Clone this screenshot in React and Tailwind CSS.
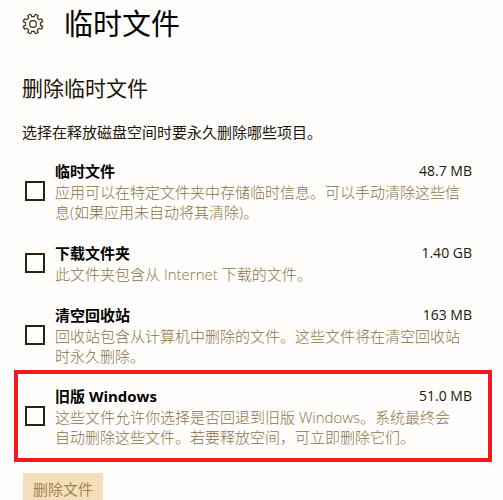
import React from "react";

const items = [
  {
    id: "temp",
    name: "临时文件",
    size: "48.7 MB",
    description: "应用可以在特定文件夹中存储临时信息。可以手动清除这些信\n息(如果应用未自动将其清除)。",
  },
  {
    id: "downloads",
    name: "下载文件夹",
    size: "1.40 GB",
    description: "此文件夹包含从 Internet 下载的文件。",
  },
  {
    id: "recycle",
    name: "清空回收站",
    size: "163 MB",
    description: "回收站包含从计算机中删除的文件。这些文件将在清空回收站\n时永久删除。",
  },
  {
    id: "old-windows",
    name: "旧版 Windows",
    size: "51.0 MB",
    description: "这些文件允许你选择是否回退到旧版 Windows。系统最终会\n自动删除这些文件。若要释放空间，可立即删除它们。",
    highlighted: true,
  },
];

export default function App() {
  return (
    <main className="h-screen overflow-hidden bg-[#fffefd] pt-1 text-[15px] leading-5 text-[#1c1508] font-['Open_Sans','Noto_Sans_CJK_SC',sans-serif]">
      <header className="flex items-center gap-5 px-[22px]">
        <GearIcon />
        <h1 className="text-[29px] leading-10 text-black">临时文件</h1>
      </header>

      <section className="mt-7">
        <h2 className="px-[22px] text-[21px] leading-8">删除临时文件</h2>
        <p className="mt-[18px] px-[22px]">选择在释放磁盘空间时要永久删除哪些项目。</p>

        <ul className="mt-[18px] mr-[11px] ml-[14px]">
          {items.map((item) => (
            <CleanupItem key={item.id} item={item} />
          ))}
        </ul>

        <button
          type="button"
          disabled
          className="mt-[11px] ml-[23px] h-8 bg-[#f5dfba] px-[10px] text-[#a08558]"
        >
          删除文件
        </button>
      </section>
    </main>
  );
}

function CleanupItem({ item }) {
  const frame = item.highlighted
    ? "mt-1 border-4 border-[#f5191f] py-[11px]"
    : "mt-5 border-x-4 border-transparent first:mt-0";

  return (
    <li className={`flex items-center gap-[10px] pr-4 pl-[7px] ${frame}`}>
      <input
        id={item.id}
        type="checkbox"
        className="size-5 shrink-0 appearance-none border-2 border-[#2b220f] bg-white checked:bg-[#2b220f]"
      />
      <div className="min-w-0 flex-1">
        <div className="flex justify-between leading-[22px]">
          <label htmlFor={item.id} className="font-bold text-black">
            {item.name}
          </label>
          <span className="text-[14px]">{item.size}</span>
        </div>
        <p className="font-light whitespace-pre-line text-[#8a7242]">{item.description}</p>
      </div>
    </li>
  );
}

// Eight flat teeth, with a gap pointing straight up
function GearIcon() {
  const point = (radius, degrees) => {
    const angle = (degrees * Math.PI) / 180;
    return `${(11 + radius * Math.cos(angle)).toFixed(2)} ${(11 + radius * Math.sin(angle)).toFixed(2)}`;
  };
  const teeth = Array.from({ length: 8 }, (_, i) => {
    const a = 22.5 + i * 45;
    return [point(7.6, a - 12), point(10, a - 9), point(10, a + 9), point(7.6, a + 12)].join(" L");
  });

  return (
    <svg viewBox="0 0 22 22" className="size-[22px] shrink-0" fill="none" stroke="#3d3115" strokeWidth="1.2" strokeLinejoin="round" aria-hidden="true">
      <path d={`M${teeth.join(" L")} Z`} />
      <circle cx="11" cy="11" r="3.3" />
    </svg>
  );
}
